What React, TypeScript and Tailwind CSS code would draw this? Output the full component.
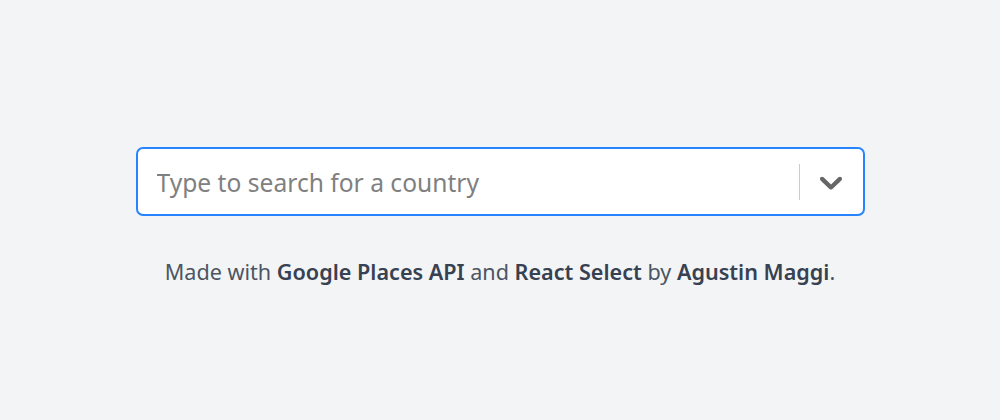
import { useState } from "react";

export default function App() {
  const [query, setQuery] = useState("");

  return (
    <div className="flex min-h-[420px] w-full flex-col items-center bg-[#f3f4f6] pt-[147px] font-['Noto_Sans',sans-serif]">
      <div className="flex h-[69px] w-[729px] items-center rounded-[7px] border-2 border-[#2684ff] bg-white">
        <input
          value={query}
          onChange={(e) => setQuery(e.target.value)}
          placeholder="Type to search for a country"
          className="h-full flex-1 bg-transparent pl-[19px] pt-px text-[24.6px] text-[#333] outline-none placeholder:text-[#808080]"
        />
        <span className="h-[36px] w-px bg-[#cccccc]" />
        <button className="flex h-full w-[63px] items-center justify-center text-[#666]">
          <svg viewBox="0 0 20 20" className="h-[38px] w-[38px]" fill="currentColor">
            <path d="M4.516 7.548c0.436-0.446 1.043-0.481 1.576 0l3.908 3.747 3.908-3.747c0.533-0.481 1.141-0.446 1.574 0 0.436 0.445 0.408 1.197 0 1.615-0.406 0.418-4.695 4.502-4.695 4.502-0.217 0.223-0.502 0.335-0.787 0.335s-0.57-0.112-0.789-0.335c0 0-4.287-4.084-4.695-4.502s-0.436-1.17 0-1.615z" />
          </svg>
        </button>
      </div>
      <p className="mt-[40px] text-[21.6px] leading-[32px] text-[#4b5563]">
        Made with <span className="font-semibold text-[#374151]">Google Places API</span> and{" "}
        <span className="font-semibold text-[#374151]">React Select</span> by{" "}
        <span className="font-semibold text-[#374151]">Agustin Maggi</span>.
      </p>
    </div>
  );
}
